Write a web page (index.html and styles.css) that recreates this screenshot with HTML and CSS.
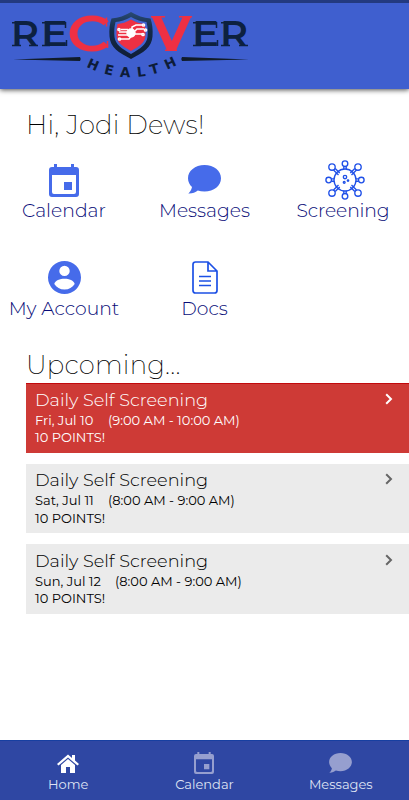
FILE: index.html
```
<!DOCTYPE html>
<html lang="en">
<head>
<meta charset="utf-8">
<meta name="viewport" content="width=device-width, initial-scale=1">
<title>Recover Health</title>
<link rel="stylesheet" href="styles.css">
</head>
<body>
<svg width="0" height="0" class="defs" aria-hidden="true">
  <symbol id="calendar" viewBox="0 0 30 33"><path fill-rule="evenodd" d="M5 0h3v3h14V0h3v3h2q3 0 3 3v24q0 3-3 3H3q-3 0-3-3V6q0-3 3-3h2zM3 11v17q0 2 2 2h20q2 0 2-2V11zM15 18h8v8h-8z"/></symbol>
  <symbol id="chat" viewBox="0 0 33 29"><path d="M16.500 0C7 0 0 6 0 13.200c0 3.500 1.500 6.500 4 8.800C3.500 25 2 27 .3 28.500c4 .2 7-1 9.500-3 2 .7 4.200 1 6.700 1 9.500 0 16.500-6 16.500-13.300S26 0 16.500 0z"/></symbol>
  <symbol id="chevron" viewBox="0 0 8 12"><path d="M1.200 1.200 6 6 1.200 10.800" fill="none" stroke="currentColor" stroke-width="2"/></symbol>
</svg>
<div class="app">
  <header class="header">
    <svg class="logo" width="270" height="86" viewBox="0 0 270 86">
      <defs>
        <linearGradient id="shieldEdge" x1="0" y1="0" x2="0" y2="1"><stop offset="0" stop-color="#294a73"/><stop offset=".4" stop-color="#122a48"/><stop offset="1" stop-color="#101d35"/></linearGradient>
      </defs>
      <g class="logo-word">
        <text x="11" y="43" textLength="28" lengthAdjust="spacingAndGlyphs">R</text>
        <text x="41" y="43" textLength="27" lengthAdjust="spacingAndGlyphs">E</text>
        <text x="192" y="43" textLength="27" lengthAdjust="spacingAndGlyphs">E</text>
        <text x="220" y="43" textLength="28" lengthAdjust="spacingAndGlyphs">R</text>
      </g>
      <path class="serifs" d="M12 19.700h8M12 42.500h9M29 42.500h9M42 19.700h8M42 42.500h8M65.500 19v6M66.500 37v6M193 19.700h8M193 42.500h8M216.500 19v6M217.500 37v6M221 19.700h8M221 42.500h9M239 42.500h9"/>
      <text class="logo-c" x="67" y="47.500" textLength="43" lengthAdjust="spacingAndGlyphs">C</text>
      <path class="serifs serifs-red" d="M106.500 14.500v9M107.500 38v7M151 13.700h14M179 13.700h13M165 47.300h12"/>
      <path d="M131 9q9 5.500 19.500 6.500c1.800 5 2.500 11 2 18-.8 11-9 16-21.500 22.500-12.500-6.500-20.700-11.500-21.500-22.500-.5-7 .2-13 2-18Q122 14.500 131 9z" fill="url(#shieldEdge)"/>
      <path d="M131 14q8 4.500 15.500 5c1.500 6 1.500 10 1 15-1 7.500-7 11.500-16.500 17-9.500-5.500-15.500-9.500-16.500-17-.5-5-.5-9 1-15q7.500-.5 15.500-5z" fill="#4264d1"/>
      <path d="M131 16.500q7 4 13.500 4.500c1.200 5 1.200 9 .8 13-.8 5.500-6 9.500-14.300 14-8.300-4.500-13.500-8.500-14.300-14-.4-4-.4-8 .8-13q6.500-.5 13.500-4.500z" fill="#ee3043"/>
      <g fill="none" stroke="#fff" stroke-width="1.500">
        <path d="M132 27V24l4-2h7M135 28l2-2h7M134 31h8M121 26.500h7M119 29h9M118 32h12M121 36h8l3-4"/>
        <circle cx="131" cy="30" r="4" fill="#fff"/>
        <circle cx="143.500" cy="22" r="1.100"/><circle cx="145.500" cy="27" r="1.100"/><circle cx="143" cy="31.500" r="1.100"/>
        <circle cx="119" cy="26.500" r="1.100"/><circle cx="119.500" cy="36" r="1.100"/>
      </g>
      <text class="logo-v" x="152" y="48" textLength="39" lengthAdjust="spacingAndGlyphs">V</text>
      <path d="M13 56.500 80 54q1.500 2 0 4zM249 56.500 182 54q-1.500 2 0 4z" fill="#101c2b"/>
      <g class="logo-health">
        <path id="arc" d="M86 63.500Q131 86 178 61.500" fill="none"/>
        <text><textPath href="#arc" textLength="95" lengthAdjust="spacing">HEALTH</textPath></text>
      </g>
    </svg>
  </header>
  <main class="content">
    <h1 class="heading greeting"><span>Hi, Jodi Dews!</span></h1>
    <nav class="tiles">
      <a class="tile"><svg class="i-cal"><use href="#calendar"/></svg><span>Calendar</span></a>
      <a class="tile"><svg class="i-chat"><use href="#chat"/></svg><span>Messages</span></a>
      <a class="tile"><svg class="i-virus" viewBox="0 0 40 40">
        <g fill="none" stroke="#1f50e8" stroke-width="1.350">
          <circle cx="20" cy="20" r="11"/>
          <circle cx="20" cy="3.700" r="2.800"/><path d="M18.800 6.500V9M21.200 6.500V9"/><circle cx="36.300" cy="20" r="2.800"/><path d="M33.500 18.800H31M33.500 21.200H31"/><circle cx="20" cy="36.300" r="2.800"/><path d="M18.800 33.500V31M21.200 33.500V31"/><circle cx="3.700" cy="20" r="2.800"/><path d="M6.500 18.800H9M6.500 21.200H9"/>
          <circle cx="7" cy="7" r="3.200"/><circle cx="33" cy="7" r="3.200"/><circle cx="7" cy="33" r="3.200"/><circle cx="33" cy="33" r="3.200"/>
          <path d="m8.500 10 5 5M10.200 8.500l4.500 4.500M31.500 10l-5 5M29.800 8.500 25.300 13M8.500 30l5-5M10.200 31.500l4.500-4.500M31.500 30l-5-5M29.800 31.500l-4.500-4.500"/>
          <circle cx="20" cy="17" r="1.700"/><circle cx="23" cy="20.500" r=".7"/><circle cx="19.200" cy="22.300" r=".9"/>
        </g></svg><span class="t-screening">Screening</span></a>
      <a class="tile"><svg class="i-user" viewBox="0 0 33 33"><path fill-rule="evenodd" d="M16.500 0a16.500 16.500 0 1 0 0 33 16.500 16.500 0 0 0 0-33zm0 4.700a5.200 5.200 0 1 1 0 10.400 5.200 5.200 0 0 1 0-10.400zm0 23.800c-4.500 0-8-2-10.200-5.500C7 19.500 12 17.800 16.500 17.800S26 19.500 26.700 23c-2.200 3.500-5.700 5.500-10.200 5.500z"/></svg><span>My Account</span></a>
      <a class="tile"><svg class="i-doc" viewBox="0 0 26 33"><path d="M3.500 1H16l9 9v19.500q0 2.500-2.500 2.500h-19Q1 32 1 29.500v-26Q1 1 3.500 1zM16 1v9h9M7 15.500h12M7 20h12M7 24.500h12" fill="none" stroke="#1c50e5" stroke-width="1.700"/></svg><span>Docs</span></a>
    </nav>
    <h2 class="heading upcoming"><span>Upcoming...</span></h2>
    <section class="events">
      <article class="event event-active">
        <div><h3>Daily Self Screening</h3><p><span class="date">Fri, Jul 10</span><span>(9:00 AM - 10:00 AM)</span></p><p>10 POINTS!</p></div>
        <svg class="chevron"><use href="#chevron"/></svg>
      </article>
      <article class="event">
        <div><h3>Daily Self Screening</h3><p><span class="date">Sat, Jul 11</span><span>(8:00 AM - 9:00 AM)</span></p><p>10 POINTS!</p></div>
        <svg class="chevron"><use href="#chevron"/></svg>
      </article>
      <article class="event">
        <div><h3>Daily Self Screening</h3><p><span class="date date-wide">Sun, Jul 12</span><span>(8:00 AM - 9:00 AM)</span></p><p>10 POINTS!</p></div>
        <svg class="chevron"><use href="#chevron"/></svg>
      </article>
    </section>
  </main>
  <footer class="tabs">
    <a class="tab tab-on"><svg class="n-home" viewBox="0 0 22 19"><path d="m0 10 11-9.500 4 3.500V1h3v5.600l4 3.400-1.500 1.600L11 3.500l-9.500 8.100zM4 11l7-6 7 6v8h-5v-6H9v6H4z"/></svg><span>Home</span></a>
    <a class="tab"><svg class="n-cal" viewBox="0 0 30 33"><use href="#calendar" width="30" height="33"/></svg><span>Calendar</span></a>
    <a class="tab"><svg class="n-chat"><use href="#chat"/></svg><span>Messages</span></a>
  </footer>
</div>
</body>
</html>
```
FILE: styles.css
```
* { box-sizing: border-box; }
body { margin: 0; background: #fff; font-family: Montserrat, Inter, "Open Sans", sans-serif; font-weight: 300; color: #000; }
h1, h2, h3, p { margin: 0; font-weight: 300; }
svg { display: block; flex: none; }
.defs { position: absolute; }
.app { height: 800px; display: flex; flex-direction: column; overflow: hidden; }
.header { height: 89px; flex: none; background: #3f5fcf; border-top: 3px solid #233a80; box-shadow: 0 1px 5px rgba(0,0,0,.7); }
.logo { overflow: visible; }
.logo-word { font: 600 34.500px Montserrat, "Open Sans", sans-serif; fill: #0d2140; }
.serifs { fill: none; stroke: #0d2140; stroke-width: 1.500px; }
.serifs-red { stroke: #ee3043; }
.logo-c { font: 600 50px Montserrat, "Open Sans", sans-serif; fill: #ee3043; }
.logo-v { font: 700 50px Montserrat, "Open Sans", sans-serif; fill: #ee3043; }
.logo-health { font: 700 13.500px "DejaVu Sans", sans-serif; fill: #0d1c38; }
.content { flex: 1; }
.heading { font-size: 26px; line-height: 32px; padding-left: 26px; white-space: nowrap; font-weight: 200; }
.greeting { margin-top: 20px; letter-spacing: .2px; }
.tiles { display: grid; grid-template-columns: 128px 153px 124px; grid-template-rows: 98px 98px; margin-top: 19px; }
.tile { display: flex; flex-direction: column; align-items: center; fill: #466bea; color: #080c78; font-size: 18.800px; line-height: 24px; white-space: nowrap; }
.tile .i-cal { width: 30px; height: 33px; margin: 4px 0 2px; }
.tile .i-chat { width: 33px; height: 29px; margin: 5px 0; }
.tile .i-virus { width: 40px; height: 40px; margin: 0 0 -1px; position: relative; left: 2px; }
.tile .i-user { width: 33px; height: 33px; margin: 3px 0; }
.tile .i-doc { width: 26px; height: 33px; margin: 3px 0; }
.t-screening { letter-spacing: -.15px; }
.upcoming { margin-top: -8px; line-height: 35px; letter-spacing: .2px; }
.events { padding-left: 26px; display: grid; gap: 11px; }
.event { height: 69.700px; background: #ebebeb; padding: 3.500px 16px 0 9px; display: flex; justify-content: space-between; }
.event h3 { font-size: 17.700px; line-height: 25px; }
.event p { font-size: 13px; line-height: 17.500px; display: flex; white-space: nowrap; font-weight: 400; }
.date { width: 73px; }
.date-wide { width: 80px; }
.event-active { background: #ce3a36; color: #fff; border-top: 1px solid #c2090d; padding-top: 2.500px; }
.chevron { width: 8px; height: 12px; margin-top: 6px; color: #666; }
.event-active .chevron { color: #fff; }
.tabs { height: 60px; flex: none; background: #2f47a3; border-top: 1px solid #173fa1; display: grid; grid-template-columns: repeat(3, 1fr); }
.tab { display: flex; flex-direction: column; align-items: center; color: #dfe3f3; fill: #969fcf; font-size: 13px; line-height: 18px; font-weight: 400; }
.tab-on { fill: #fff; }
.tab svg { margin-top: 13px; }
.tab span { margin-top: auto; margin-bottom: 7px; }
.tab .n-home { width: 22px; height: 19px; }
.tab .n-cal { width: 20px; height: 22px; margin-top: 11px; }
.tab .n-chat { width: 23px; height: 20px; margin-top: 12px; }
```
